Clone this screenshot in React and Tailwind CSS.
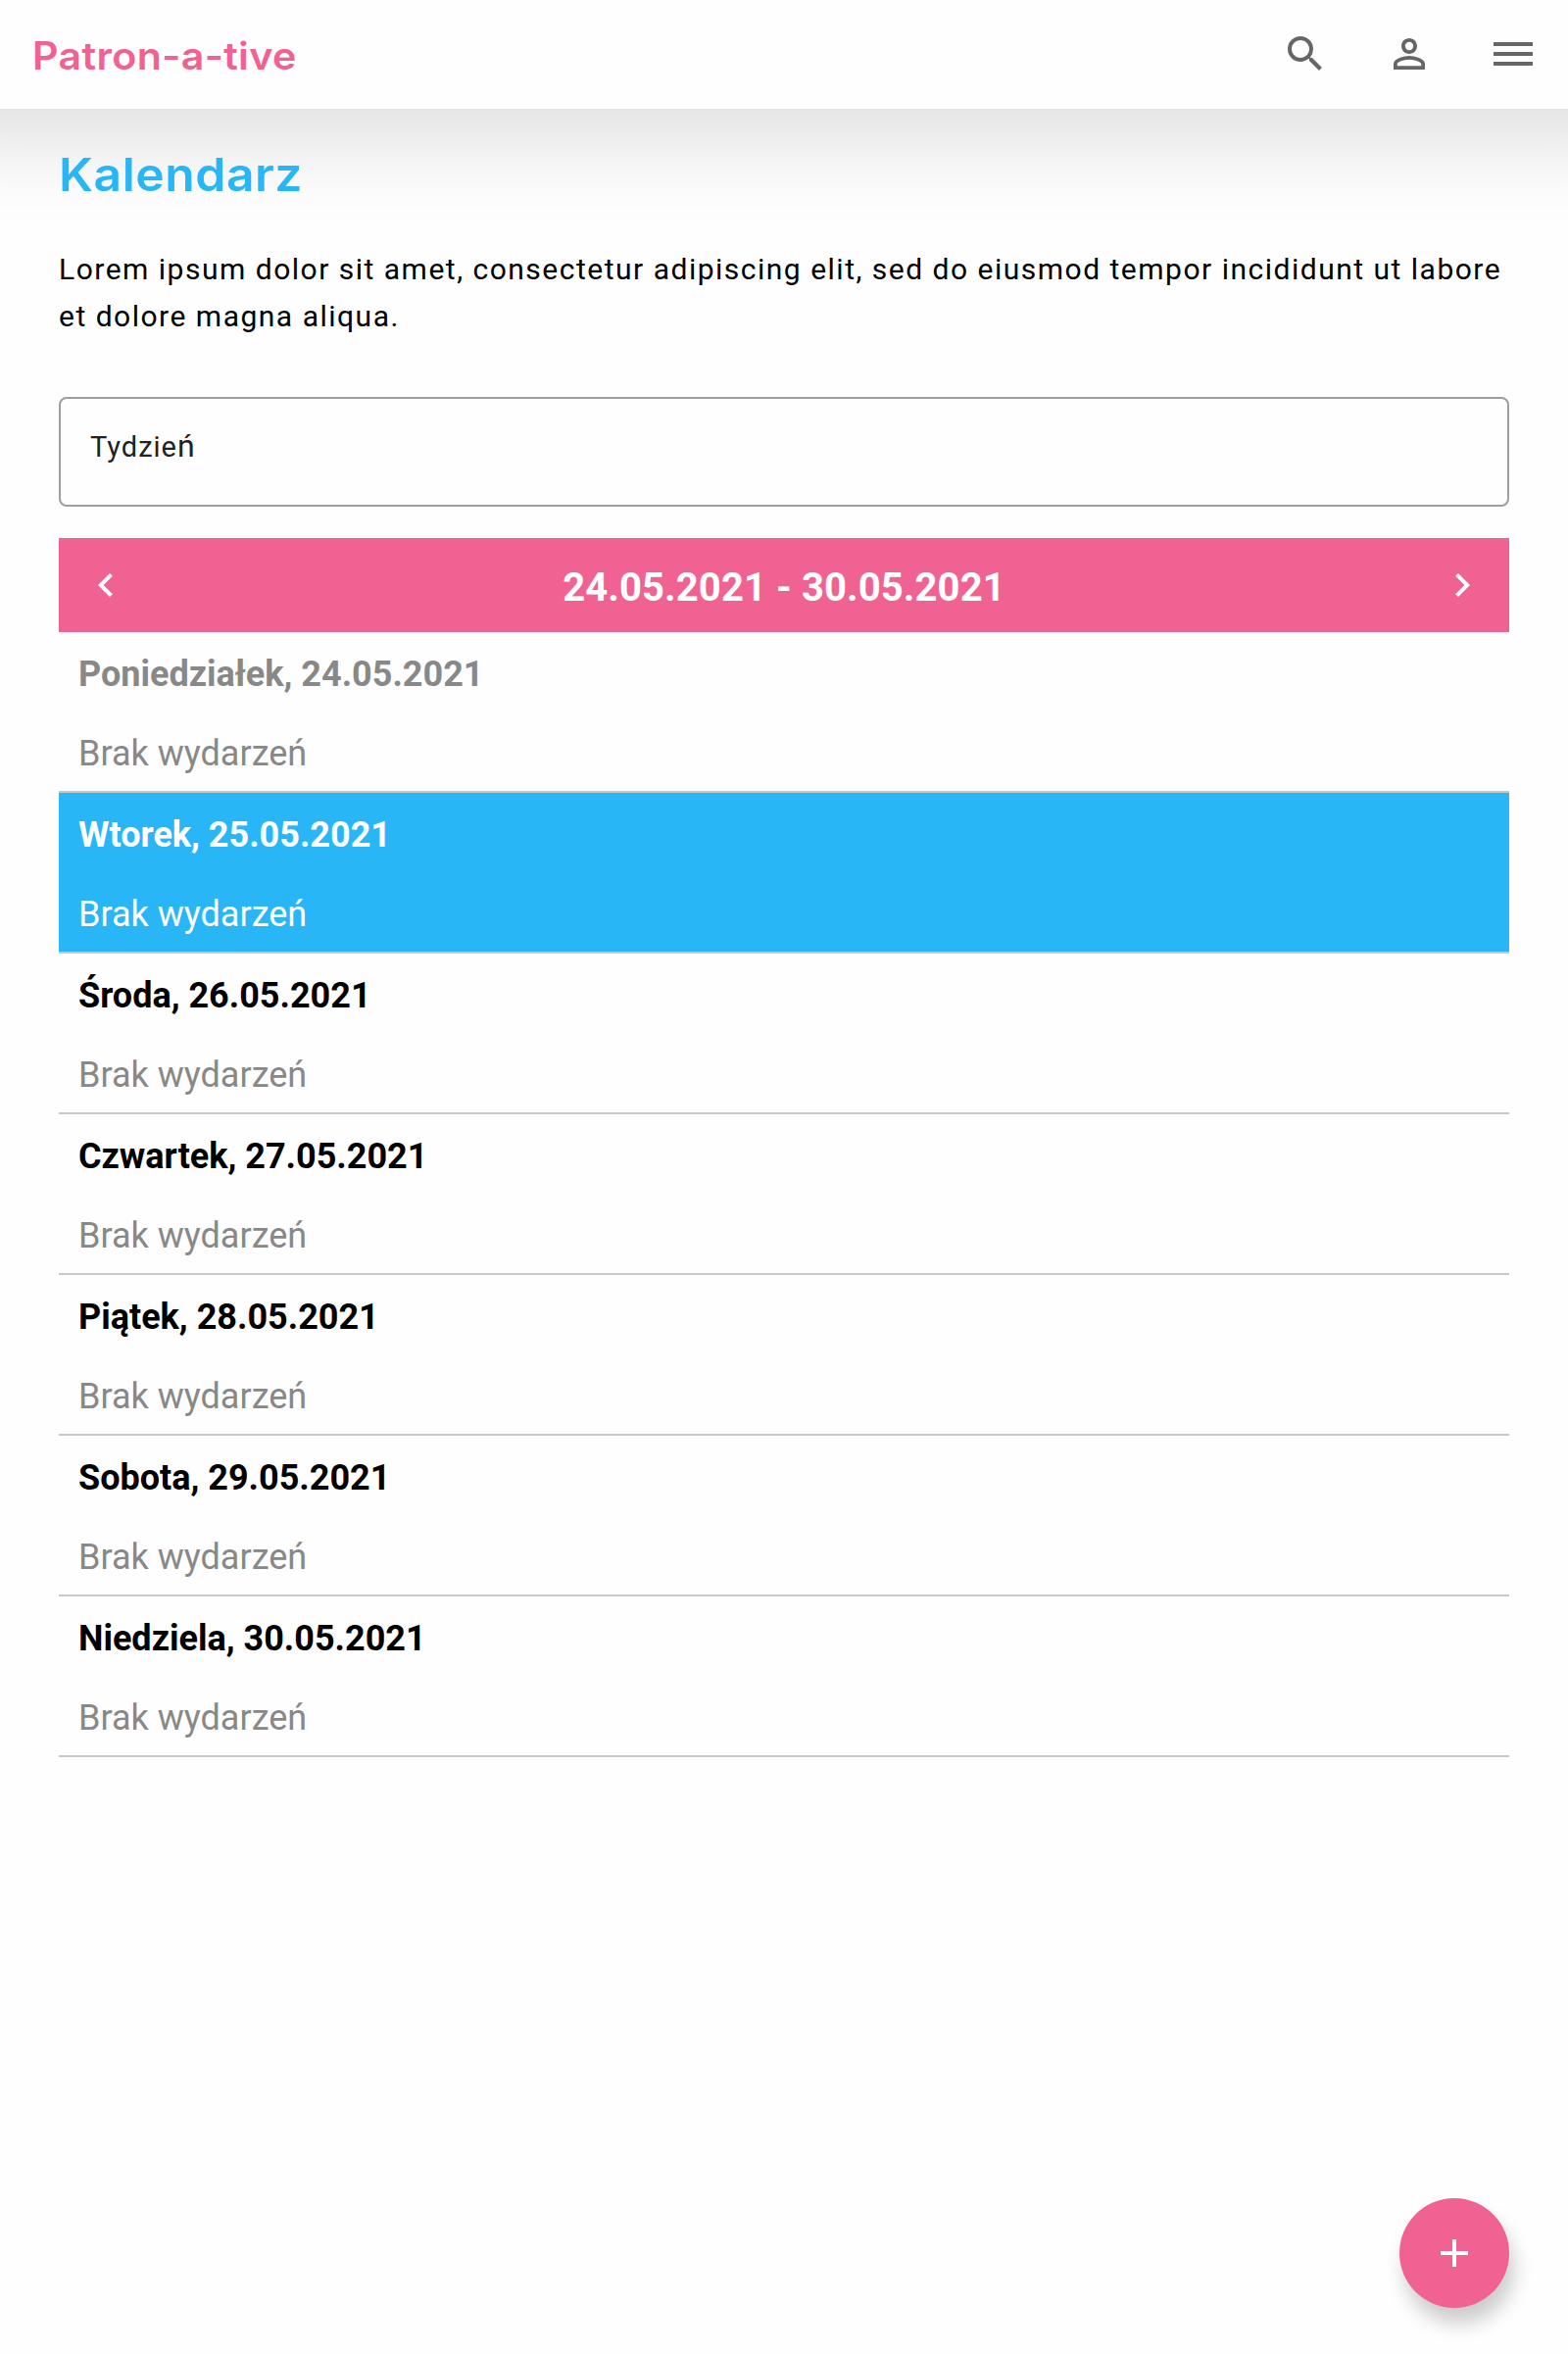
import { MdSearch, MdPersonOutline, MdAdd, MdChevronLeft, MdChevronRight } from "react-icons/md";

const days = [
  { label: "Poniedziałek, 24.05.2021", state: "past" },
  { label: "Wtorek, 25.05.2021", state: "today" },
  { label: "Środa, 26.05.2021", state: "upcoming" },
  { label: "Czwartek, 27.05.2021", state: "upcoming" },
  { label: "Piątek, 28.05.2021", state: "upcoming" },
  { label: "Sobota, 29.05.2021", state: "upcoming" },
  { label: "Niedziela, 30.05.2021", state: "upcoming" },
];

const rowStyles = {
  past: "text-[#888]",
  today: "bg-[#29b6f6] text-white",
  upcoming: "text-black",
};

const noteStyles = {
  past: "text-[#888]",
  today: "text-white",
  upcoming: "text-[#888]",
};

function MenuIcon() {
  return (
    <svg viewBox="0 0 24 24" className="size-12" fill="currentColor">
      <path d="M2 6h20v2H2zM2 11h20v2H2zM2 16h20v2H2z" />
    </svg>
  );
}

function Header() {
  return (
    <header className="flex h-[111px] items-start justify-between bg-[#fefefe] pr-8 pl-[33px] shadow-[0_-44px_90px_76px_rgba(0,0,0,0.13)]">
      <h1 className="mt-[33px] origin-left scale-x-[1.055] font-['Inter',sans-serif] text-[39px] leading-[48px] font-semibold tracking-[0.35px] text-[#f06292]">
        Patron-a-tive
      </h1>
      <nav className="mt-[31px] flex gap-[58px] text-5xl text-[#666]">
        <MdSearch />
        <MdPersonOutline />
        <MenuIcon />
      </nav>
    </header>
  );
}

function DayRow({ label, state }) {
  return (
    <li className={`h-[164px] border-b-2 border-[#c8c8c8] pl-5 text-4xl ${rowStyles[state]}`}>
      <p className="h-[81px] pt-[5px] leading-[76px] font-bold">{label}</p>
      <p className={`h-[81px] pt-[5px] leading-[76px] ${noteStyles[state]}`}>Brak wydarzeń</p>
    </li>
  );
}

export default function App() {
  return (
    <div className="relative h-[2402px] overflow-hidden bg-[#fefefe] font-['Roboto',sans-serif]">
      <Header />
      <main className="relative px-15">
        <h2 className="origin-left scale-x-[1.06] pt-[35px] font-['Inter',sans-serif] text-[47px] leading-[64px] font-semibold tracking-[0.5px] text-[#29b6f6]">
          Kalendarz
        </h2>
        <p className="mt-[41px] text-[30px] leading-[48px] tracking-[1.5px] whitespace-nowrap text-black">
          Lorem ipsum dolor sit amet, consectetur adipiscing elit, sed do eiusmod tempor incididunt ut labore
          <br />
          et dolore magna aliqua.
        </p>
        <div className="mt-[58px] h-28 rounded-lg border-2 border-[#9e9e9e] pt-7 pl-[30px] text-[29px] leading-10 text-[#212121]">
          <span className="tracking-[1px]">Tydzie</span>
          <span className="text-[32px]">ń</span>
        </div>
        <div className="mt-8 flex h-24 items-center justify-between bg-[#f06292] px-6 text-5xl text-white">
          <MdChevronLeft />
          <span className="pt-[5px] text-[40px] leading-[48px] font-bold tracking-[0.1px]">24.05.2021 - 30.05.2021</span>
          <MdChevronRight />
        </div>
        <ul>
          {days.map((day) => (
            <DayRow key={day.label} {...day} />
          ))}
        </ul>
      </main>
      <button className="absolute right-15 bottom-[47px] flex size-28 items-center justify-center rounded-full bg-[#f06292] text-5xl text-white shadow-[5px_16px_20px_rgba(0,0,0,0.2)]">
        <MdAdd />
      </button>
    </div>
  );
}
